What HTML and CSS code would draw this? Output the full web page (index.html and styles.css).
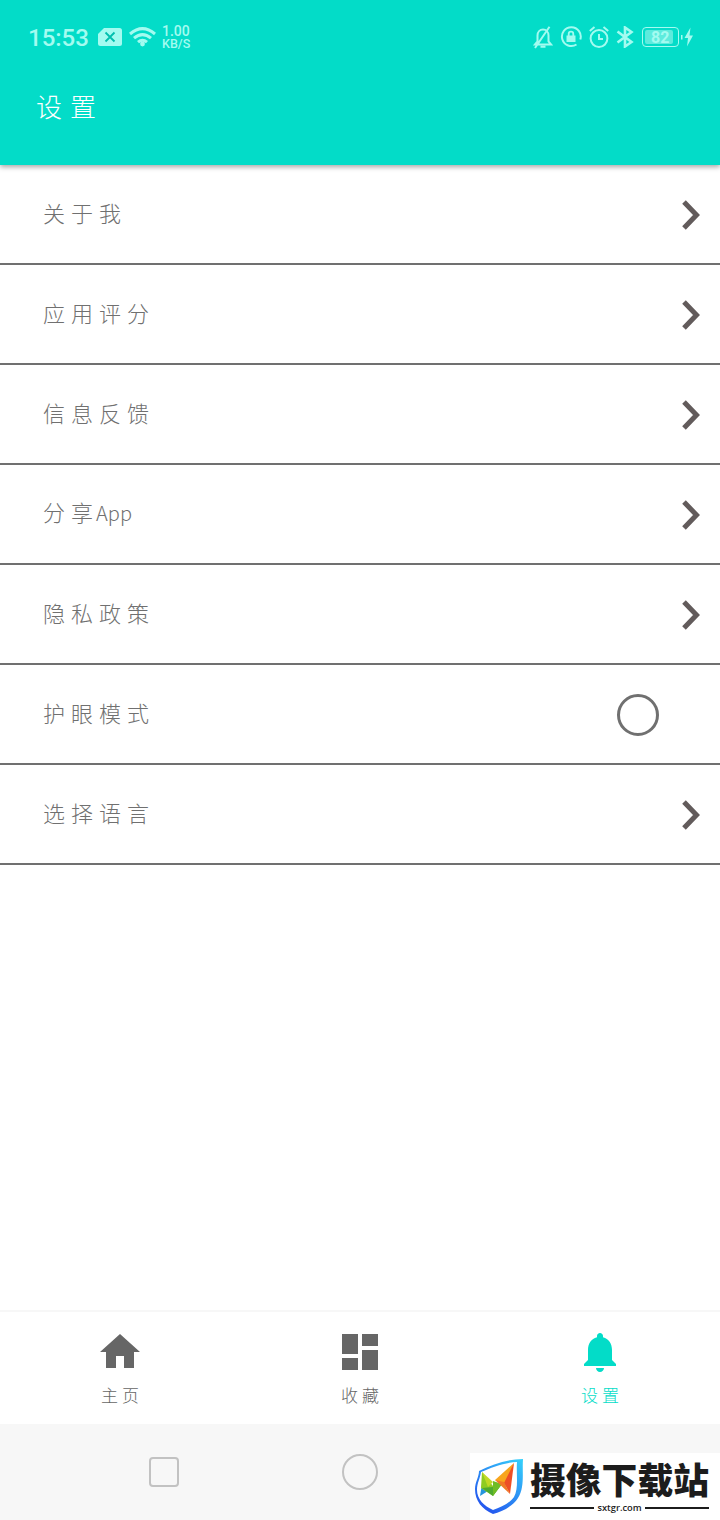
FILE: index.html
```html
<!DOCTYPE html>
<html lang="zh-CN">
<head>
    <meta charset="UTF-8">
    <meta name="viewport" content="width=device-width, initial-scale=1.0">
    <title>设置</title>
    <link rel="stylesheet" href="styles.css">
</head>
<body>

    <div class="screen">
        <!-- Header -->
        <header class="header">
            <div class="status-bar">
                <span class="time">15:53</span>
                <svg class="sim" width="24" height="18" viewBox="0 0 24 18">
                    <path fill="currentColor" d="M6 0h15.500q2.500 0 2.500 2.500v13q0 2.500-2.500 2.500h-19Q0 18 0 15.500V6z"/>
                    <path d="M7.500 4.500l9 9m0-9l-9 9" stroke="#00bfae" stroke-width="1.800"/>
                </svg>
                <svg class="wifi" width="27" height="20" viewBox="0 0 27 20" fill="none" stroke="currentColor" stroke-width="3">
                    <path d="M1 7Q13.500-3.700 26 7M5 11.200Q13.500 4 22 11.200M9 15.200Q13.500 11.200 18 15.200"/>
                    <circle cx="13.500" cy="17" r="2.400" fill="currentColor" stroke="none"/>
                </svg>
                <div class="speed"><span>1.00</span><span class="unit">KB/S</span></div>

                <div class="status-right">
                    <svg width="20" height="23" viewBox="0 0 20 23" fill="none" stroke="currentColor" stroke-width="2">
                        <path d="M2 18.500h16l-2.500-3V9.500C15.500 5.800 13 3.500 10 3.500S4.500 5.800 4.500 9.500v6zM7.500 20.800h5M16.500.8L2 22"/>
                    </svg>
                    <svg width="22" height="22" viewBox="0 0 22 22" fill="none" stroke="currentColor" stroke-width="2">
                        <path d="M16.500 18.500A9.400 9.400 0 1 1 20.300 13.500"/>
                        <path d="M6.500 9.500h9V16h-9z" fill="currentColor" stroke="none"/>
                        <path d="M8.700 10V8a2.300 2.300 0 0 1 4.600 0v2" stroke-width="1.800"/>
                    </svg>
                    <svg width="20" height="22" viewBox="0 0 20 22" fill="none" stroke="currentColor" stroke-width="2">
                        <circle cx="10" cy="12.500" r="8.400"/>
                        <path d="M10 8v5h4M.8 5L5.500 1M14.500 1l4.700 4"/>
                    </svg>
                    <svg width="18" height="22" viewBox="0 0 18 22" fill="none" stroke="currentColor" stroke-width="2.600">
                        <path d="M1.500 5.500l14 10.500-6.500 4.500v-19L15.500 6l-14 10.500"/>
                    </svg>
                    <div class="battery"><span class="level">82</span></div>
                    <svg class="bolt" width="12" height="20" viewBox="0 0 12 20">
                        <path fill="currentColor" d="M0 8h1.500v4.500H0zM9.500.5L3.500 11H7L6 19.500l6-11H8.500z"/>
                    </svg>
                </div>
            </div>
            <h1>设置</h1>
        </header>

        <!-- Settings list -->
        <main class="list">
            <div class="row">
                <span class="label">关于我</span>
                <svg class="arrow" viewBox="0 0 20 32"><path d="M3 3l12.500 13L3 29"/></svg>
            </div>
            <div class="row">
                <span class="label">应用评分</span>
                <svg class="arrow" viewBox="0 0 20 32"><path d="M3 3l12.500 13L3 29"/></svg>
            </div>
            <div class="row">
                <span class="label">信息反馈</span>
                <svg class="arrow" viewBox="0 0 20 32"><path d="M3 3l12.500 13L3 29"/></svg>
            </div>
            <div class="row">
                <span class="label">分享<span class="latin">App</span></span>
                <svg class="arrow" viewBox="0 0 20 32"><path d="M3 3l12.500 13L3 29"/></svg>
            </div>
            <div class="row">
                <span class="label">隐私政策</span>
                <svg class="arrow" viewBox="0 0 20 32"><path d="M3 3l12.500 13L3 29"/></svg>
            </div>
            <div class="row">
                <span class="label">护眼模式</span>
                <span class="radio"></span>
            </div>
            <div class="row">
                <span class="label">选择语言</span>
                <svg class="arrow" viewBox="0 0 20 32"><path d="M3 3l12.500 13L3 29"/></svg>
            </div>
        </main>

        <!-- Tabs -->
        <nav class="tabs">
            <div class="tab">
                <svg width="48" height="48" viewBox="0 0 24 24"><path d="M10 20v-6h4v6h5v-8h3L12 3 2 12h3v8z"/></svg>
                <span>主页</span>
            </div>
            <div class="tab">
                <svg width="48" height="48" viewBox="0 0 24 24"><path d="M3 13h8V3H3v10zm0 8h8v-6H3v6zm10 0h8V11h-8v10zm0-18v6h8V3h-8z"/></svg>
                <span>收藏</span>
            </div>
            <div class="tab active">
                <svg width="48" height="48" viewBox="0 0 24 24"><path d="M12 22c1.100 0 2-.9 2-2h-4c0 1.100.9 2 2 2zM18 16v-5c0-3.070-1.640-5.640-4.500-6.320V4c0-.83-.67-1.500-1.500-1.500s-1.500.67-1.500 1.500v.68C7.630 5.360 6 7.920 6 11v5l-2 2v1h16v-1l-2-2z"/></svg>
                <span>设置</span>
            </div>
        </nav>

        <!-- System buttons -->
        <footer class="system-nav">
            <span class="recent"></span>
            <span class="home"></span>
        </footer>

        <!-- Site badge -->
        <div class="badge">
            <svg width="50" height="58" viewBox="0 0 50 58">
                <defs>
                    <linearGradient id="shield" x1="1" y1="0" x2="0.3" y2="1">
                        <stop offset="0" stop-color="#35d2fb"/>
                        <stop offset="1" stop-color="#2455ee"/>
                    </linearGradient>
                </defs>
                <path fill="url(#shield)" fill-rule="evenodd" d="M49 1C48 14 51 29 44 40C39 48 28 54 19 56C8 51 1 43 1 31C1 24 5 19 5 13C19 6 34 1 49 1zM43 4C33 4 18 9 7 14C6 21 3 25 3 32C3 41 10 48 19 52C27 49 36 45 40 39C45 30 42 16 43 4z"/>
                <path fill="#2696dd" d="M8 26L6 38l8-5z"/>
                <path fill="#8fcc22" d="M8 14l11 14v10L7 30z"/>
                <path fill="#c1d927" d="M8 14l11 10-5 5z"/>
                <path fill="#4faa30" d="M19 38l-11-8 11-1 9-3z"/>
                <path fill="#6fbd25" d="M19 23l9 3-9 12z"/>
                <path fill="#f8a51d" d="M40 5L21 22l11 6z"/>
                <path fill="#ed4e25" d="M40 5L30 25l6 11z"/>
                <path fill="#f07925" d="M21 22l9 2 6 12z"/>
            </svg>
            <div class="badge-text">
                <strong>摄像下载站</strong>
                <div class="site"><i></i><span>sxtgr.com</span><i></i></div>
            </div>
        </div>
    </div>

</body>
</html>
```
FILE: styles.css
```css
* {
    box-sizing: border-box;
}

body {
    margin: 0;
    background: #fff;
    font-family: "Noto Sans CJK SC", sans-serif;
    font-weight: 300;
}

.screen {
    position: relative;
    width: 720px;
    height: 1520px;
    display: flex;
    flex-direction: column;
    overflow: hidden;
}

svg {
    display: block;
    flex: none;
}

/* Header */
.header {
    height: 165px;
    background: #03dcc8;
    box-shadow: 0 2px 5px rgba(0, 0, 0, 0.35);
    z-index: 1;
}

.status-bar {
    height: 74px;
    padding: 0 27px 0 28px;
    display: flex;
    align-items: center;
    color: #a3fbf0;
    font-family: Roboto, sans-serif;
    font-weight: 500;
}

.time {
    width: 70px;
    font-size: 24px;
    line-height: 28px;
    padding-top: 2px;
}

.wifi {
    margin-left: 7px;
}

.speed {
    margin-left: 6px;
    display: flex;
    flex-direction: column;
    font-size: 14px;
    line-height: 13px;
}

.speed .unit {
    font-size: 12.500px;
    line-height: 12px;
}

.status-right {
    margin-left: auto;
    display: flex;
    align-items: center;
    gap: 7px;
}

.battery {
    width: 37px;
    height: 20px;
    margin: -1px 0 0 1px;
    padding: 2px;
    border: 1px solid #a3fbf0;
    border-radius: 4px;
}

.level {
    display: block;
    width: 28px;
    height: 14px;
    padding-left: 6px;
    background: #5eebdd;
    border-radius: 2px;
    font-size: 16px;
    font-weight: 700;
    line-height: 15px;
}

.bolt {
    margin-left: -5px;
}

h1 {
    margin: 13px 0 0 36px;
    font-size: 26px;
    line-height: 38px;
    font-weight: 300;
    letter-spacing: 8px;
    color: #fff;
}

/* Settings list */
.list {
    flex: 1;
}

.row {
    height: 100px;
    padding: 0 19px 2px 43px;
    display: flex;
    align-items: center;
    justify-content: space-between;
    border-bottom: 2px solid #707070;
}

.label {
    padding-bottom: 3px;
    font-size: 22px;
    line-height: 32px;
    letter-spacing: 6px;
    color: #707070;
}

.latin {
    margin-left: -3px;
    font-size: 20px;
    letter-spacing: 0;
}

.arrow {
    width: 20px;
    height: 32px;
    margin-top: 3px;
    fill: none;
    stroke: #625b5b;
    stroke-width: 5;
}

.radio {
    width: 42px;
    height: 42px;
    margin: 3px 42px 0 0;
    border: 3px solid #707070;
    border-radius: 50%;
}

/* Bottom tabs */
.tabs {
    height: 114px;
    padding-top: 16px;
    display: flex;
    border-top: 2px solid #f7f7f7;
    color: #666;
}

.tab {
    flex: 1;
    display: flex;
    flex-direction: column;
    align-items: center;
}

.tab svg {
    fill: currentColor;
}

.tab span {
    margin-top: 6px;
    padding-left: 4px;
    font-size: 17px;
    line-height: 26px;
    letter-spacing: 4px;
}

.active {
    color: #03dcc8;
}

/* System buttons */
.system-nav {
    height: 96px;
    padding-left: 149px;
    display: flex;
    align-items: center;
    background: #f7f7f7;
}

.recent {
    width: 30px;
    height: 30px;
    border: 2px solid #c2c2c2;
    border-radius: 4px;
}

.home {
    width: 36px;
    height: 36px;
    margin-left: 163px;
    border: 2px solid #c2c2c2;
    border-radius: 50%;
}

/* Badge laid over the system buttons */
.badge {
    position: absolute;
    right: 0;
    bottom: 0;
    width: 250px;
    height: 67px;
    padding: 5px 0 0 4px;
    display: flex;
    background: #fff;
    z-index: 2;
}

.badge-text {
    width: 179px;
    margin: -1px 0 0 6px;
    color: #1c1c1c;
}

.badge-text strong {
    display: block;
    font-size: 35.800px;
    font-weight: 900;
    line-height: 42px;
    white-space: nowrap;
}

.site {
    display: flex;
    align-items: center;
    gap: 3px;
    margin-top: 3px;
    font: 600 9.300px/12px "Open Sans", sans-serif;
}

.site i {
    flex: 1;
    height: 2px;
    background: #1c1c1c;
}
```
